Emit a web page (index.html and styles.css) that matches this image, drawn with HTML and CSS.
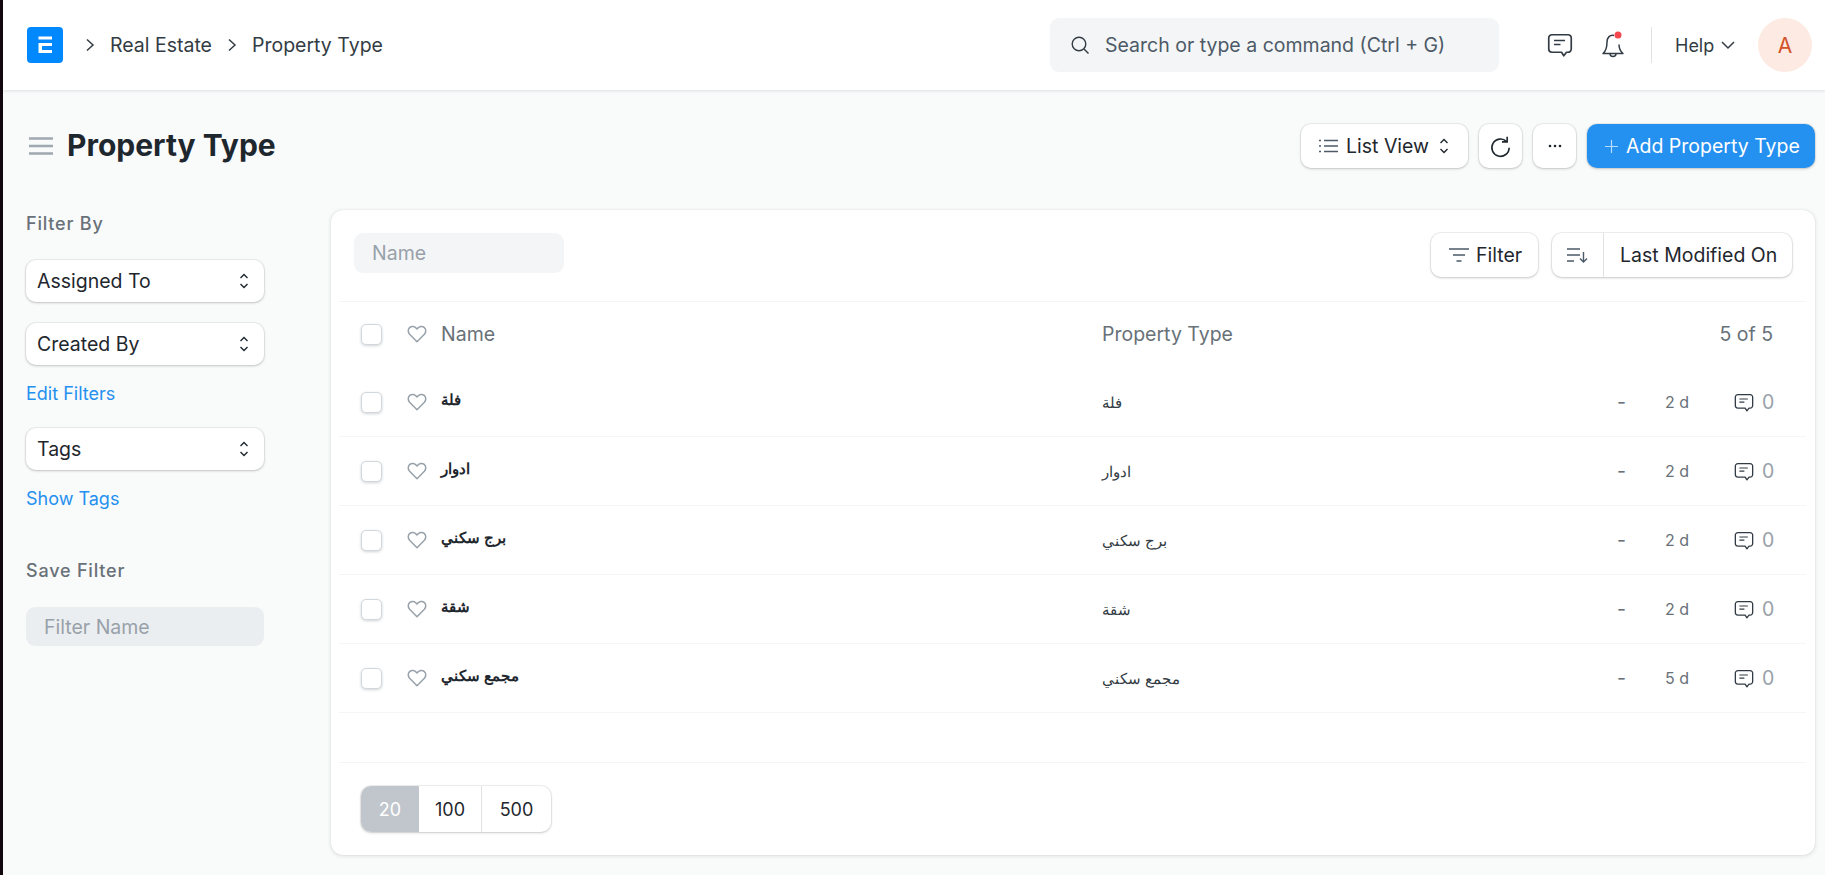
FILE: index.html
```html
<!DOCTYPE html>
<html lang="en">
<head>
<meta charset="UTF-8">
<meta name="viewport" content="width=device-width, initial-scale=1.0">
<title>Property Type</title>
<link rel="stylesheet" href="styles.css">
</head>
<body>
<svg class="icon-defs" width="0" height="0">
  <symbol id="i-select" viewBox="0 0 12 20"><path d="M2.500 7 6 3.500 9.500 7M2.500 13 6 16.500 9.500 13" fill="none" stroke="currentColor" stroke-width="1.400"/></symbol>
  <symbol id="i-heart" viewBox="0 0 20 20"><path d="M10 17.800 2.600 10.200C.6 8 .9 5 2.800 3.400 4.900 1.700 8 2.300 10 5c2-2.700 5.100-3.300 7.200-1.600 1.900 1.600 2.200 4.600.2 6.800Z" fill="none" stroke="currentColor" stroke-width="1.500" stroke-linejoin="round"/></symbol>
  <symbol id="i-comment" viewBox="0 0 26 24"><path d="M5 1.750h16A3.250 3.250 0 0 1 24.250 5v11A3.250 3.250 0 0 1 21 19.250h-1.500L16.800 22.800 14.500 19.250H5A3.250 3.250 0 0 1 1.750 16V5A3.250 3.250 0 0 1 5 1.750Z" fill="none" stroke="currentColor" stroke-width="1.700" stroke-linejoin="round"/><path d="M7 7.500h11M7 11.500h6.500" fill="none" stroke="currentColor" stroke-width="1.500"/></symbol>
</svg>

<header class="navbar">
  <div class="brand">
    <svg class="logo" viewBox="0 0 36 36"><rect width="36" height="36" rx="4" fill="#0089ff"/><path d="M11.500 9.500h13.500v3H11.500ZM11.500 16h13.500v3h-10v4h10v3H11.500Z" fill="#fff"/></svg>
    <nav class="crumbs">
      <svg class="crumb-arrow" viewBox="0 0 10 14"><path d="M2 1.500l6 5.500-6 5.500" fill="none" stroke="currentColor" stroke-width="1.500"/></svg>
      <span>Real Estate</span>
      <svg class="crumb-arrow" viewBox="0 0 10 14"><path d="M2 1.500l6 5.500-6 5.500" fill="none" stroke="currentColor" stroke-width="1.500"/></svg>
      <span>Property Type</span>
    </nav>
  </div>
  <div class="nav-right">
    <div class="search">
      <svg class="search-icon" viewBox="0 0 20 20"><circle cx="9" cy="9" r="6.800" fill="none" stroke="currentColor" stroke-width="1.400"/><path d="M14 14l4.500 4.500" stroke="currentColor" stroke-width="1.400"/></svg>
      <span>Search or type a command (Ctrl + G)</span>
    </div>
    <svg class="nav-comment"><use href="#i-comment"/></svg>
    <svg class="nav-bell" viewBox="0 0 24 28"><path d="M13 4.500C8.500 3.500 6 7 6 11c0 5-1 9-4 11.500h20c-3-2.500-4-6-4-9M9 22.500c0 4 6 4 6 0" fill="none" stroke="currentColor" stroke-width="1.500" stroke-linejoin="round"/><circle cx="17" cy="4" r="3.500" fill="#f5474e"/></svg>
    <span class="nav-divider"></span>
    <div class="help">Help
      <svg class="help-arrow" viewBox="0 0 14 10"><path d="M1 2l6 6 6-6" fill="none" stroke="currentColor" stroke-width="1.500"/></svg>
    </div>
    <div class="avatar">A</div>
  </div>
</header>

<div class="page-head">
  <div class="page-title">
    <svg class="menu-icon" viewBox="0 0 24 18"><path d="M0 1.500h24M0 9h24M0 16.500h24" stroke="currentColor" stroke-width="2.400"/></svg>
    <h1>Property Type</h1>
  </div>
  <div class="page-actions">
    <button class="btn btn-view" type="button">
      <svg class="btn-icon" viewBox="0 0 20 16"><path d="M5 2.500h14M5 8h14M5 13.500h14M0 2.500h2M0 8h2M0 13.500h2" stroke="currentColor" stroke-width="1.400"/></svg>
      List View
      <svg class="select-icon"><use href="#i-select"/></svg>
    </button>
    <button class="btn btn-square" type="button">
      <svg class="refresh-icon" viewBox="0 0 20 20"><path d="M15.800 1.500v4.500h-4.500M15.300 5.700A7.500 7.500 0 1 0 17.500 11" fill="none" stroke="currentColor" stroke-width="1.400"/></svg>
    </button>
    <button class="btn btn-square" type="button">
      <svg class="dots-icon" viewBox="0 0 14 4"><circle cx="2" cy="2" r="1.300" fill="currentColor"/><circle cx="7" cy="2" r="1.300" fill="currentColor"/><circle cx="12" cy="2" r="1.300" fill="currentColor"/></svg>
    </button>
    <button class="btn btn-primary" type="button">
      <svg class="plus-icon" viewBox="0 0 14 14"><path d="M7 0v14M0 7h14" stroke="currentColor" stroke-width="1.300"/></svg>
      Add Property Type
    </button>
  </div>
</div>

<main class="layout">
  <aside class="sidebar">
    <div class="side-label">Filter By</div>
    <div class="side-select first">Assigned To <svg class="select-icon"><use href="#i-select"/></svg></div>
    <div class="side-select">Created By <svg class="select-icon"><use href="#i-select"/></svg></div>
    <a class="side-link">Edit Filters</a>
    <div class="side-select first">Tags <svg class="select-icon"><use href="#i-select"/></svg></div>
    <a class="side-link">Show Tags</a>
    <div class="side-label save">Save Filter</div>
    <div class="side-input">Filter Name</div>
  </aside>

  <section class="card">
    <div class="toolbar">
      <div class="name-input">Name</div>
      <div class="toolbar-right">
        <button class="btn btn-filter" type="button">
          <svg class="filter-icon" viewBox="0 0 20 14"><path d="M0 1h20M4 7h12M7.500 13h5" stroke="currentColor" stroke-width="1.500"/></svg>
          Filter
        </button>
        <div class="btn sort-group">
          <span class="sort-icon-wrap">
            <svg class="sort-icon" viewBox="0 0 21 16"><path d="M0 2h13M0 8h13M0 14h7M16.500 5v10M13 11.500l3.500 3.500 3.500-3.500" fill="none" stroke="currentColor" stroke-width="1.400"/></svg>
          </span>
          <span class="sort-label">Last Modified On</span>
        </div>
      </div>
    </div>

    <div class="row row-head">
      <span class="col-check"><span class="checkbox"></span></span>
      <span class="col-like"><svg class="heart"><use href="#i-heart"/></svg></span>
      <span class="col-name">Name</span>
      <span class="col-type">Property Type</span>
      <span class="col-count">5 of 5</span>
    </div>

    <div class="row">
      <span class="col-check"><span class="checkbox"></span></span>
      <span class="col-like"><svg class="heart"><use href="#i-heart"/></svg></span>
      <span class="col-name ar-bold">فلة</span>
      <span class="col-type ar">فلة</span>
      <span class="col-dash">-</span>
      <span class="col-age">2 d</span>
      <span class="col-comments"><svg class="row-comment"><use href="#i-comment"/></svg>0</span>
    </div>
    <div class="row">
      <span class="col-check"><span class="checkbox"></span></span>
      <span class="col-like"><svg class="heart"><use href="#i-heart"/></svg></span>
      <span class="col-name ar-bold">ادوار</span>
      <span class="col-type ar">ادوار</span>
      <span class="col-dash">-</span>
      <span class="col-age">2 d</span>
      <span class="col-comments"><svg class="row-comment"><use href="#i-comment"/></svg>0</span>
    </div>
    <div class="row">
      <span class="col-check"><span class="checkbox"></span></span>
      <span class="col-like"><svg class="heart"><use href="#i-heart"/></svg></span>
      <span class="col-name ar-bold">برج سكني</span>
      <span class="col-type ar">برج سكني</span>
      <span class="col-dash">-</span>
      <span class="col-age">2 d</span>
      <span class="col-comments"><svg class="row-comment"><use href="#i-comment"/></svg>0</span>
    </div>
    <div class="row">
      <span class="col-check"><span class="checkbox"></span></span>
      <span class="col-like"><svg class="heart"><use href="#i-heart"/></svg></span>
      <span class="col-name ar-bold">شقة</span>
      <span class="col-type ar">شقة</span>
      <span class="col-dash">-</span>
      <span class="col-age">2 d</span>
      <span class="col-comments"><svg class="row-comment"><use href="#i-comment"/></svg>0</span>
    </div>
    <div class="row">
      <span class="col-check"><span class="checkbox"></span></span>
      <span class="col-like"><svg class="heart"><use href="#i-heart"/></svg></span>
      <span class="col-name ar-bold">مجمع سكني</span>
      <span class="col-type ar">مجمع سكني</span>
      <span class="col-dash">-</span>
      <span class="col-age">5 d</span>
      <span class="col-comments"><svg class="row-comment"><use href="#i-comment"/></svg>0</span>
    </div>

    <div class="list-gap"></div>
    <div class="pager-wrap">
      <div class="pager">
        <span class="page-size active">20</span>
        <span class="page-size wide">100</span>
        <span class="page-size last">500</span>
      </div>
    </div>
  </section>
</main>
</body>
</html>
```

FILE: styles.css
```css
/* page */
* {
  box-sizing: border-box;
}

body {
  margin: 0;
  min-height: 875px;
  background-color: #f9fafa;
  border-left: 3px solid #12060f;
  font-family: Inter, "Noto Sans", sans-serif;
  font-size: 19.5px;
  color: #1f272e;
}

.icon-defs {
  position: absolute;
}

svg {
  display: block;
  flex: none;
}

/* top bar */
.navbar {
  display: flex;
  justify-content: space-between;
  align-items: center;
  height: 90px;
  padding: 0 13px 0 24px;
  background-color: #fff;
  box-shadow: 0 1px 3px rgba(25, 39, 52, 0.12);
}

.brand,
.crumbs,
.nav-right {
  display: flex;
  align-items: center;
}

.logo {
  width: 36px;
  height: 36px;
}

.crumbs {
  margin-left: 22px;
  color: #333c44;
}

.crumb-arrow {
  width: 10px;
  height: 14px;
}

.crumbs span {
  margin: 0 15px 0 15px;
}

.search {
  display: flex;
  align-items: center;
  width: 449px;
  height: 54px;
  padding-left: 20px;
  background-color: #f4f5f6;
  border-radius: 9px;
  color: #4c5a67;
}

.search-icon {
  width: 20px;
  height: 20px;
  margin-right: 15px;
  color: #333c44;
}

.nav-comment {
  width: 26px;
  height: 24px;
  margin-left: 48px;
  color: #333c44;
}

.nav-bell {
  width: 24px;
  height: 28px;
  margin-left: 28px;
  color: #333c44;
}

.nav-divider {
  width: 1px;
  height: 36px;
  margin: 0 23px 0 26px;
  background-color: #dfe3e6;
}

.help {
  display: flex;
  align-items: center;
  width: 59px;
  color: #333c44;
  font-size: 18px;
}

.help-arrow {
  width: 14px;
  height: 10px;
  margin-left: 7px;
}

.avatar {
  display: flex;
  justify-content: center;
  align-items: center;
  width: 54px;
  height: 54px;
  margin-left: 24px;
  background-color: #fdeae3;
  border-radius: 50%;
  color: #d2532a;
  font-size: 21px;
}

/* page heading */
.page-head {
  display: flex;
  justify-content: space-between;
  align-items: center;
  padding: 34px 10px 42px 26px;
}

.page-title,
.page-actions {
  display: flex;
  align-items: center;
}

.menu-icon {
  width: 24px;
  height: 18px;
  margin-right: 14px;
  color: #a0a8b0;
}

h1 {
  margin: 0 0 2px;
  font-size: 30px;
  font-weight: 700;
  line-height: 42px;
}

.btn {
  display: flex;
  align-items: center;
  height: 44px;
  padding: 0;
  background-color: #fff;
  border: none;
  border-radius: 10px;
  box-shadow: 0 0 0 1px rgba(0, 0, 0, 0.05), 0 1px 3px rgba(0, 0, 0, 0.18);
  font-family: inherit;
  font-size: 19.5px;
  color: #1f272e;
}

.btn-view {
  width: 167px;
  padding-left: 18px;
}

.btn-icon {
  width: 20px;
  height: 16px;
  margin-right: 7px;
  color: #4c5a67;
}

.select-icon {
  width: 12px;
  height: 20px;
}

.btn-view .select-icon {
  margin-left: 9px;
}

.btn-square {
  justify-content: center;
  width: 43px;
  margin-left: 11px;
}

.refresh-icon {
  width: 23px;
  height: 23px;
}

.dots-icon {
  width: 14px;
  height: 4px;
}

.btn.btn-primary {
  width: 228px;
  margin-left: 11px;
  padding-left: 18px;
  background-color: #2490ef;
  color: #fff;
}

.plus-icon {
  width: 13px;
  height: 13px;
  margin-right: 8px;
  color: #b7dbfa;
}

/* layout */
.layout {
  display: flex;
  align-items: flex-start;
}

.sidebar {
  width: 328px;
  padding-left: 23px;
  padding-right: 67px;
}

.side-label {
  font-size: 18px;
  font-weight: 500;
  line-height: 28px;
  letter-spacing: 0.8px;
  color: #687178;
}

.side-label.save {
  margin-top: 46px;
}

.side-select {
  display: flex;
  justify-content: space-between;
  align-items: center;
  height: 42px;
  margin-top: 21px;
  padding: 0 14px 0 11px;
  background-color: #fff;
  border-radius: 10px;
  box-shadow: 0 0 0 1px rgba(0, 0, 0, 0.05), 0 1px 3px rgba(0, 0, 0, 0.18);
}

.side-select.first {
  margin-top: 22px;
}

.side-link {
  display: block;
  margin-top: 17px;
  font-size: 18px;
  line-height: 24px;
  color: #2490ef;
}

.side-input {
  display: flex;
  align-items: center;
  height: 39px;
  margin-top: 22px;
  padding-left: 18px;
  background-color: #ebeef0;
  border-radius: 9px;
  color: #98a1a9;
}

/* list card */
.card {
  width: 1484px;
  height: 645px;
  background-color: #fff;
  border-radius: 12px;
  box-shadow: 0 0 1px rgba(25, 39, 52, 0.2), 0 1px 4px rgba(25, 39, 52, 0.12);
}

.toolbar {
  display: flex;
  justify-content: space-between;
  align-items: flex-start;
  height: 92px;
  margin: 0 9px 0 8px;
  padding: 23px 14px 0 15px;
  border-bottom: 1px solid #f4f5f6;
}

.name-input {
  display: flex;
  align-items: center;
  width: 210px;
  height: 40px;
  padding-left: 18px;
  padding-bottom: 1px;
  background-color: #f4f5f6;
  border-radius: 9px;
  color: #98a1a9;
}

.toolbar-right {
  display: flex;
}

.btn-filter {
  width: 107px;
  padding-left: 18px;
  margin-right: 14px;
}

.filter-icon {
  width: 20px;
  height: 14px;
  margin-right: 7px;
  color: #4c5a67;
}

.sort-group {
  width: 240px;
}

.sort-icon-wrap {
  display: flex;
  justify-content: center;
  align-items: center;
  width: 52px;
  height: 44px;
  border-right: 1px solid #dfe3e6;
}

.sort-icon {
  width: 21px;
  height: 16px;
  color: #4c5a67;
}

.sort-label {
  padding-left: 16px;
}

/* list rows */
.row {
  display: flex;
  align-items: center;
  height: 69px;
  margin: 0 9px 0 8px;
  padding: 0 33px 0 22px;
  border-bottom: 1px solid #f4f5f6;
}

.row-head {
  height: 66px;
  padding-bottom: 2px;
  border-bottom: none;
  color: #687178;
}

.col-check {
  width: 46px;
}

.checkbox {
  display: block;
  width: 21px;
  height: 21px;
  background-color: #fff;
  border: 1px solid #d1d8dd;
  border-radius: 5px;
  box-shadow: 0 1px 3px rgba(25, 39, 52, 0.2);
}

.col-like {
  width: 34px;
}

.heart {
  width: 20px;
  height: 20px;
  color: #98a1a9;
}

.col-name {
  width: 661px;
}

.col-type {
  flex: 1;
}

.ar-bold {
  font-weight: 700;
  font-size: 15.2px;
  margin-top: -6px;
}

.ar {
  font-size: 15.2px;
  color: #333c44;
}

.col-count {
  color: #687178;
}

.col-dash {
  width: 48px;
  font-size: 19.5px;
  color: #687178;
}

.col-age {
  width: 69px;
  font-size: 16px;
  color: #687178;
}

.col-comments {
  display: flex;
  align-items: center;
  width: 39px;
  color: #98a1a9;
}

.row-comment {
  width: 20px;
  height: 19px;
  margin-right: 8px;
  color: #333c44;
}

.list-gap {
  height: 50px;
  margin: 0 9px 0 8px;
  border-bottom: 1px solid #f4f5f6;
}

/* pager */
.pager-wrap {
  padding: 23px 30px;
  font-size: 18px;
}

.pager {
  display: flex;
  width: 190px;
  height: 46px;
  border-radius: 10px;
  box-shadow: 0 0 0 1px rgba(0, 0, 0, 0.06), 0 1px 3px rgba(0, 0, 0, 0.16);
}

.page-size {
  display: flex;
  justify-content: center;
  align-items: center;
  width: 58px;
}

.page-size.active {
  background-color: #c0c6cc;
  border-radius: 10px 0 0 10px;
  color: #fff;
}

.page-size.wide {
  width: 63px;
  border-right: 1px solid #dfe3e6;
}

.page-size.last {
  width: 69px;
}
```
